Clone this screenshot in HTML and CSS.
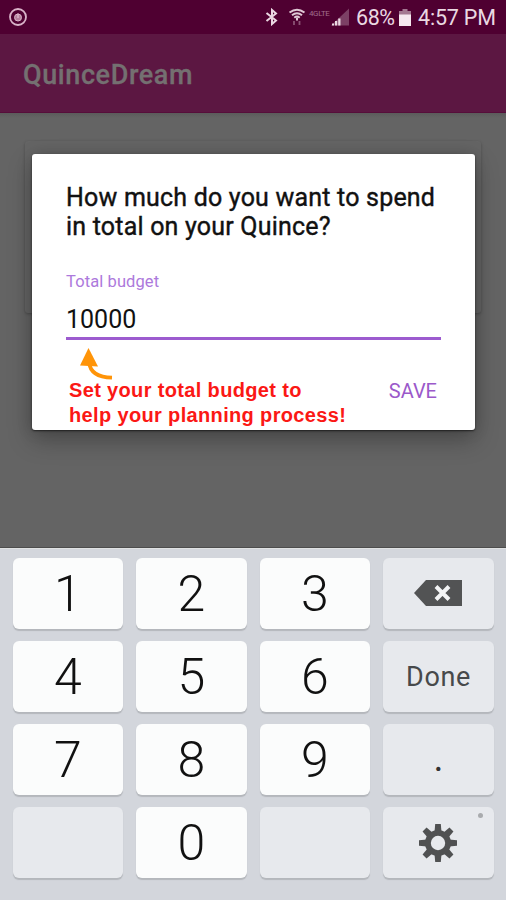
FILE: index.html
```html
<!DOCTYPE html>
<html lang="en">
<head>
<meta charset="utf-8">
<title>QuinceDream</title>
<link rel="stylesheet" href="styles.css">
</head>
<body>
<div class="phone">
  <header class="status">
    <svg class="alert" width="20" height="20" viewBox="0 0 20 20" fill="none" stroke="#d9b3c9"><circle cx="10" cy="10" r="8" stroke-width="1.8"/><circle cx="10" cy="10.500" r="3.500" fill="#b57f9d" stroke-width="1"/><path d="M10 11V6.500" stroke-width="1.500"/></svg>
    <svg class="bluetooth" width="14" height="18" viewBox="0 0 14 18" fill="none" stroke="#ead8e2" stroke-width="2"><path d="M1.500 5l9.500 7.500L7 16V2l4 3.500L1.500 13"/></svg>
    <svg class="wifi" width="18" height="18" viewBox="0 0 18 18" fill="none" stroke="#e0c9d6" stroke-width="1.9"><path d="M1.500 4.600Q9-1.200 16.500 4.600M4 7.300Q9 3 14 7.300M6.300 9.700Q9 7.300 11.700 9.700"/><path d="M9 9.500v3" stroke-width="2"/><path d="M6 13v4M11.500 13v4" stroke="#8a5274" stroke-width="1.800"/></svg>
    <span class="carrier">4GLTE</span>
    <svg class="signal" width="19" height="18" viewBox="0 0 19 18"><path d="M0 17.500L18 .5v17z" fill="#7c4065"/><path d="M1 17.500v-2h2v2zM4 17.500v-4.500h2.200v4.500zM7.200 17.500V10.500h2.300v7z" fill="#ead8e2"/></svg>
    <span class="percent">68%</span>
    <svg class="battery" width="12" height="17" viewBox="0 0 12 17"><path d="M3.500 0h5v2H12v4H0V2h3.500z" fill="#a37891"/><path d="M0 5.500h12V17H0z" fill="#f5e8ef"/></svg>
    <span class="clock">4:57 PM</span>
  </header>
  <div class="appbar"><h1>QuinceDream</h1></div>
  <main class="content">
    <div class="card">
      <section class="dialog">
        <h2>How much do you want to spend<br>in total on your Quince?</h2>
        <label class="label">Total budget</label>
        <div class="field">10000</div>
        <svg class="arrow" width="34" height="34" viewBox="0 0 34 34"><path d="M10 14C11 25 19 29.300 33 29.700" fill="none" stroke="#ff9408" stroke-width="3.700"/><path d="M9.500 0L19 18.500 1 17.500z" fill="#ff9408"/></svg>
        <div class="footer">
          <p class="hint">Set your total budget to<br>help your planning process!</p>
          <span class="save">SAVE</span>
        </div>
      </section>
    </div>
  </main>
  <div class="keypad">
    <div class="key">1</div><div class="key">2</div><div class="key">3</div>
    <div class="key soft"><svg width="48" height="27" viewBox="0 0 48 27"><path d="M0 13L12 0H48V26H12z" fill="#525354"/><path d="M22 6.500l13 13M35 6.500l-13 13" stroke="#f3f4f5" stroke-width="4"/></svg></div>
    <div class="key">4</div><div class="key">5</div><div class="key">6</div>
    <div class="key soft done">Done</div>
    <div class="key">7</div><div class="key">8</div><div class="key">9</div>
    <div class="key soft dot">.</div>
    <div class="key soft"></div><div class="key">0</div><div class="key soft"></div>
    <div class="key soft settings"><svg width="40" height="40" viewBox="-20 -20 40 40"><g fill="#505152"><path id="tooth" d="M-3.500-11L-2.800-19H2.800L3.500-11V11L2.800 19H-2.800L-3.500 11z"/><use href="#tooth" transform="rotate(45)"/><use href="#tooth" transform="rotate(90)"/><use href="#tooth" transform="rotate(135)"/><circle r="13"/></g><circle r="7.200" fill="#e7e9ed"/></svg><i class="more"></i></div>
  </div>
</div>
</body>
</html>
```
FILE: styles.css
```css
* { box-sizing: border-box; }
body { margin: 0; font-family: Roboto, "Liberation Sans", sans-serif; }
h1, h2, p { margin: 0; }
svg { display: block; flex: none; }
.phone { width: 506px; height: 900px; display: flex; flex-direction: column; overflow: hidden; background: #646464; }
.status { height: 34px; flex: none; display: flex; align-items: center; padding: 0 11px 0 8px; background: #4f0031; color: #ead8e2; white-space: nowrap; }
.bluetooth { margin-left: auto; }
.wifi { margin: -1px 0 0 9px; }
.carrier { width: 20px; margin: -7px 0 0 3px; font-size: 8px; line-height: 10px; letter-spacing: -.4px; color: #a06c8b; }
.signal { margin-left: 2px; }
.percent { width: 38px; margin-left: 6px; font-size: 21.500px; letter-spacing: -.4px; }
.battery { margin-left: 5px; }
.clock { width: 77px; margin-left: 7px; font-size: 21.500px; letter-spacing: -.2px; }
.appbar { height: 79px; flex: none; display: flex; align-items: center; padding: 3px 23px 0; background: #5c1742; border-bottom: 1px solid #560d3a; }
.appbar h1 { font-size: 27px; line-height: 32px; font-weight: 500; letter-spacing: .6px; color: #747071; -webkit-text-stroke: .3px #747071; }
.content { height: 435px; flex: none; padding: 28px 25px; background: linear-gradient(#5b5b5b, #646464 5px); border-bottom: 1px solid #4d4d4d; }
.card { height: 172px; padding: 12.500px 7px; border-radius: 3px; background: #656565; box-shadow: 0 1px 3px rgba(0,0,0,.25); }
.dialog { width: 443px; height: 276px; padding: 29px 34px 0; display: flex; flex-direction: column; border-radius: 3px; background: #fff; box-shadow: 0 1px 2px rgba(0,0,0,.6), 0 10px 24px rgba(0,0,0,.27), 0 0 16px rgba(0,0,0,.15); }
.dialog h2 { font-size: 25px; line-height: 29px; font-weight: 400; letter-spacing: .2px; color: #111; -webkit-text-stroke: .4px #111; white-space: nowrap; }
.label { margin-top: 31px; font-size: 16.500px; line-height: 20px; letter-spacing: .1px; color: #ad79dc; }
.field { width: 375px; height: 48px; padding-top: 12px; border-bottom: 3px solid #9c5bcf; font-size: 25px; line-height: 32px; color: #111; }
.arrow { margin: 8px 0 0 13px; }
.footer { display: flex; justify-content: space-between; margin-top: -4px; padding: 0 4px 0 3px; }
.hint { font: bold 20px/25px "Liberation Sans", Arial, sans-serif; letter-spacing: .35px; color: #fb1815; white-space: nowrap; }
.save { margin-top: 1px; font-size: 20px; line-height: 24px; color: #9b59ca; }
.keypad { flex: 1; display: grid; grid-template-columns: repeat(4, 110.500px); grid-template-rows: repeat(4, 71px); gap: 12px 13px; align-content: start; padding: 9px 12.700px; background: #d3d6dc; border-top: 1px solid #e0e2e3; }
.key { display: flex; align-items: center; justify-content: center; border-radius: 6px; background: #fbfcfc; box-shadow: 0 1.500px 1px #b4b7bc; font-size: 50px; line-height: 60px; font-weight: 300; color: #111; }
.soft { background: #e7e9ed; }
.done { font-size: 27px; font-weight: 400; letter-spacing: .6px; color: #47494b; }
.dot { padding-bottom: 4px; font-size: 38px; font-weight: 400; color: #333; }
.settings { position: relative; }
.more { position: absolute; top: 6px; right: 11px; width: 5px; height: 5px; border-radius: 50%; background: #a9abae; }
```
